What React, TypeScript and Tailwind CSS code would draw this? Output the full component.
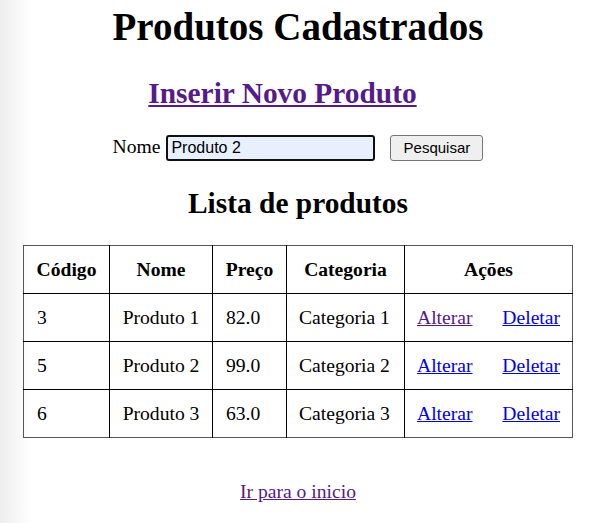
const produtos = [
  { codigo: 3, nome: 'Produto 1', preco: '82.0', categoria: 'Categoria 1', visitado: true },
  { codigo: 5, nome: 'Produto 2', preco: '99.0', categoria: 'Categoria 2', visitado: false },
  { codigo: 6, nome: 'Produto 3', preco: '63.0', categoria: 'Categoria 3', visitado: false },
];

export default function App() {
  return (
    <div className="min-h-[523px] w-full bg-[linear-gradient(to_right,#eeeeee,#ffffff_32px)] font-['Liberation_Serif',serif] text-black">
      <div className="flex w-[596px] flex-col items-center pt-[4px]">
        <h1 className="text-[39px] font-bold leading-[45px]">Produtos Cadastrados</h1>

        <a href="#" className="mr-[31px] mt-[27px] text-[29.4px] font-bold leading-[34px] text-[#551a8b] underline">
          Inserir Novo Produto
        </a>

        <form className="mt-[22px] flex items-start">
          <label className="mt-[2px] text-[19.6px] leading-[26px]">Nome</label>
          <input
            defaultValue="Produto 2"
            className="ml-[6px] mt-[3px] h-[26px] w-[209px] rounded-[3px] border-2 border-[#101010] bg-[#e8f0fe] pl-[3px] font-['Liberation_Sans',sans-serif] text-[16px] text-black outline-none"
          />
          <button
            type="button"
            className="ml-[15px] mt-[3px] h-[26px] w-[93px] rounded-[3px] border border-[#767676] bg-[#efefef] font-['Liberation_Sans',sans-serif] text-[15px] text-black"
          >
            Pesquisar
          </button>
        </form>

        <h2 className="mt-[25px] text-[29.4px] font-bold leading-[34px]">Lista de produtos</h2>

        <table className="mt-[25px] w-[549px] table-fixed border-collapse border border-[#555555] text-[19.6px]">
          <colgroup>
            <col className="w-[86px]" />
            <col className="w-[103px]" />
            <col className="w-[74px]" />
            <col className="w-[118px]" />
            <col className="w-[168px]" />
          </colgroup>
          <thead>
            <tr className="h-[48px] font-bold">
              <th className="border-b border-r border-black">Código</th>
              <th className="border-b border-r border-black">Nome</th>
              <th className="border-b border-r border-black">Preço</th>
              <th className="border-b border-r border-black">Categoria</th>
              <th className="border-b border-black">Ações</th>
            </tr>
          </thead>
          <tbody>
            {produtos.map((p, i) => {
              const last = i === produtos.length - 1;
              return (
                <tr key={p.codigo} className="h-[48px]">
                  <td className={`border-r border-black px-[13px] ${last ? '' : 'border-b'}`}>{p.codigo}</td>
                  <td className={`border-r border-black text-center ${last ? '' : 'border-b'}`}>{p.nome}</td>
                  <td className={`border-r border-black px-[13px] ${last ? '' : 'border-b'}`}>{p.preco}</td>
                  <td className={`border-r border-black px-[12px] ${last ? '' : 'border-b'}`}>{p.categoria}</td>
                  <td className={`border-black px-[12px] ${last ? '' : 'border-b'}`}>
                    <div className="flex justify-between">
                      <a href="#" className={`underline ${p.visitado ? 'text-[#551a8b]' : 'text-[#0000ee]'}`}>
                        Alterar
                      </a>
                      <a href="#" className="text-[#0000ee] underline">
                        Deletar
                      </a>
                    </div>
                  </td>
                </tr>
              );
            })}
          </tbody>
        </table>

        <a href="#" className="mt-[43px] text-[19.6px] leading-[22px] text-[#551a8b] underline">
          Ir para o inicio
        </a>
      </div>
    </div>
  );
}
